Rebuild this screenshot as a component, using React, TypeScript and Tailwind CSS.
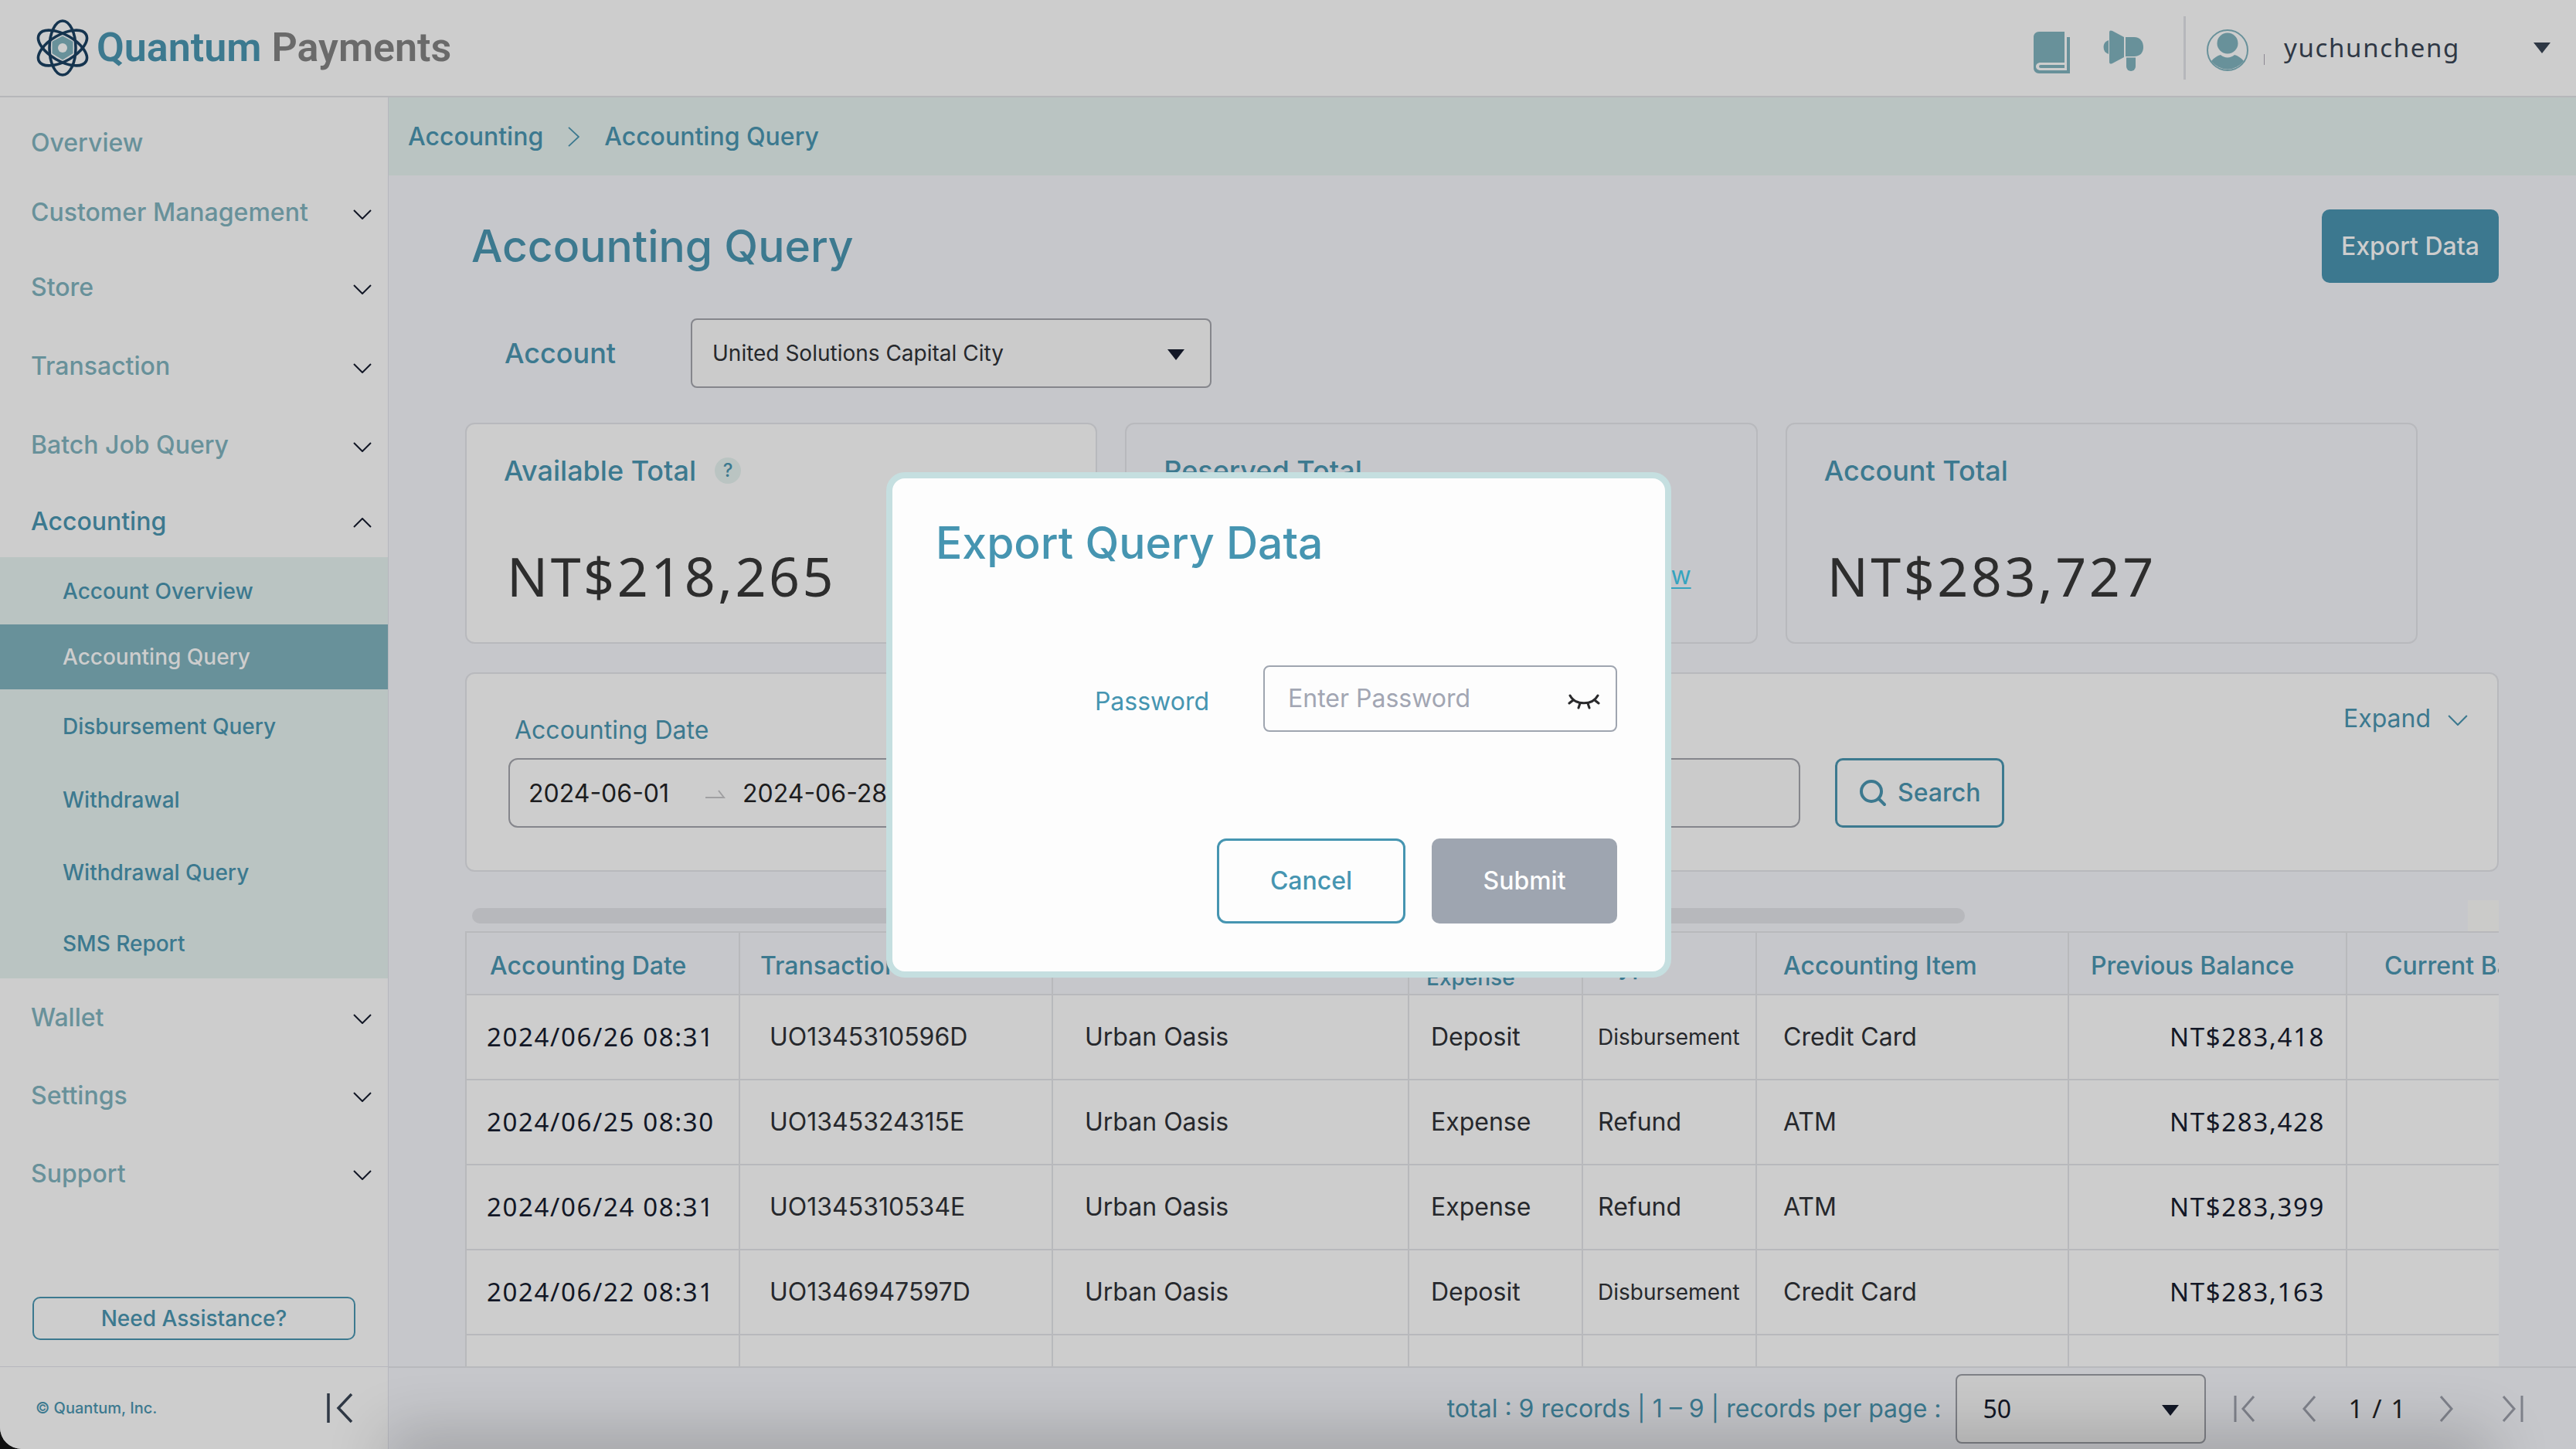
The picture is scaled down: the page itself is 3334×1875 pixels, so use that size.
import type { ReactNode } from "react";

type NavItem = { label: string; height: string; open?: boolean; leaf?: boolean };

const topNav: NavItem[] = [
  { label: "Overview", height: "h-[90px]", leaf: true },
  { label: "Customer Management", height: "h-[90px]" },
  { label: "Store", height: "h-[104px]" },
  { label: "Transaction", height: "h-[100px]" },
  { label: "Batch Job Query", height: "h-[104px]" },
  { label: "Accounting", height: "h-[93px]", open: true },
];

const subNav = [
  { label: "Account Overview", height: "h-[87px]" },
  { label: "Accounting Query", height: "h-[84px]", active: true },
  { label: "Disbursement Query", height: "h-[96px]" },
  { label: "Withdrawal", height: "h-[94px]" },
  { label: "Withdrawal Query", height: "h-[94px]" },
  { label: "SMS Report", height: "h-[90px]" },
];

const bottomNav: NavItem[] = [
  { label: "Wallet", height: "h-[101px]" },
  { label: "Settings", height: "h-[101px]" },
  { label: "Support", height: "h-[101px]" },
];

const rows = [
  ["2024/06/26 08:31", "UO1345310596D", "Urban Oasis", "Deposit", "Disbursement", "Credit Card", "NT$283,418"],
  ["2024/06/25 08:30", "UO1345324315E", "Urban Oasis", "Expense", "Refund", "ATM", "NT$283,428"],
  ["2024/06/24 08:31", "UO1345310534E", "Urban Oasis", "Expense", "Refund", "ATM", "NT$283,399"],
  ["2024/06/22 08:31", "UO1346947597D", "Urban Oasis", "Deposit", "Disbursement", "Credit Card", "NT$283,163"],
  ["", "", "", "", "", "", ""],
];

function Chevron({ dir = "down", className = "" }: { dir?: "down" | "up" | "right" | "left"; className?: string }) {
  const d = {
    down: "M1 1 L12 12 L23 1",
    up: "M1 12 L12 1 L23 12",
    right: "M1 1 L15 14 L1 27",
    left: "M15 1 L1 14 L15 27",
  }[dir];
  const flat = dir === "down" || dir === "up";
  return (
    <svg viewBox={flat ? "0 0 24 13" : "0 0 16 28"} className={className} fill="none" stroke="currentColor" strokeWidth="2" aria-hidden="true">
      <path d={d} />
    </svg>
  );
}

function Triangle({ className = "" }: { className?: string }) {
  return (
    <svg viewBox="0 0 22 14" className={`h-[14px] w-[22px] ${className}`} fill="currentColor" aria-hidden="true">
      <path d="M0 0h22L11 14z" />
    </svg>
  );
}

function Atom() {
  return (
    <svg viewBox="0 0 68 76" className="h-[76px] w-[68px]" fill="none" aria-hidden="true">
      <path d="M34 23 L47 30 V45 L34 53 L21 45 V30 Z" fill="#68919a" stroke="#68919a" strokeWidth="1" strokeLinejoin="round" />
      <circle cx="34" cy="38" r="6" fill="#cdcdcd" />
      <g stroke="#15344f" strokeWidth="3.6">
        <ellipse cx="34" cy="38" rx="17" ry="35" />
        <ellipse cx="34" cy="38" rx="17" ry="35" transform="rotate(60 34 38)" />
        <ellipse cx="34" cy="38" rx="17" ry="35" transform="rotate(-60 34 38)" />
      </g>
    </svg>
  );
}

function BookIcon() {
  return (
    <svg viewBox="0 0 47 54" className="h-[54px] w-[47px]" fill="currentColor" aria-hidden="true">
      <path d="M7 0H40V40H9C5 40 3 42.500 3 45C3 47.500 5 50 9 50H43V7H47V54H7C3 54 0 51 0 47V7C0 3 3 0 7 0Z" />
      <path d="M9 43H40V47H9A2 2 0 0 1 9 43Z" />
    </svg>
  );
}

function MegaphoneIcon() {
  return (
    <svg viewBox="0 0 54 53" className="h-[53px] w-[54px]" fill="currentColor" aria-hidden="true">
      <path d="M9 13V31A9.500 9.500 0 0 1 9 13Z" />
      <path d="M10 3C10 0 12 0 14 1L29 9V35L14 43C12 44 10 44 10 41Z" />
      <path d="M31 9H42C50 9 54 15 54 22C54 29 50 34 42 34H31Z" />
      <path d="M32 35.500H44V47A6 6 0 0 1 32 47Z" />
    </svg>
  );
}

function PersonIcon() {
  return (
    <svg viewBox="0 0 54 54" className="h-[54px] w-[54px]" aria-hidden="true">
      <circle cx="27" cy="27" r="26" fill="none" stroke="currentColor" strokeWidth="2" />
      <circle cx="27" cy="18" r="13.500" fill="currentColor" />
      <path d="M6 41C9 37 14 34 18 33C23 37.500 31 37.500 36 33C40 34 45 37 48 41A26 26 0 0 1 6 41Z" fill="currentColor" />
    </svg>
  );
}

function ClosedEyeIcon() {
  return (
    <svg viewBox="0 0 42 22" className="h-[22px] w-[42px]" fill="none" stroke="#2a2a2c" strokeWidth="3" strokeLinecap="round" aria-hidden="true">
      <path d="M3 3C10 16 32 16 39 3" />
      <path d="M7 9L2 13M35 9L40 13M16 13L14 19M26 13L28 19" />
    </svg>
  );
}

function SearchIcon() {
  return (
    <svg viewBox="0 0 36 36" className="h-[36px] w-[36px]" fill="none" stroke="currentColor" strokeWidth="4" strokeLinecap="round" aria-hidden="true">
      <circle cx="16" cy="16" r="13" />
      <path d="M26 26L33 33" />
    </svg>
  );
}

function NavRow({ item }: { item: NavItem }) {
  const tone = item.open ? "text-[#3c798f]" : "text-[#68919a]";
  if (item.leaf) {
    return (
      <a href="#overview" className={`flex items-center pl-[40px] ${item.height} ${tone}`}>
        {item.label}
      </a>
    );
  }
  return (
    <button type="button" aria-expanded={!!item.open} className={`flex w-full items-center justify-between pr-[21px] pl-[40px] text-left ${item.height} ${tone}`}>
      {item.label}
      <Chevron dir={item.open ? "up" : "down"} className="mt-1 h-[13px] w-[24px] text-[#121726]" />
    </button>
  );
}

function Card({ title, badge, tone = "", children }: { title: string; badge?: boolean; tone?: string; children: ReactNode }) {
  return (
    <section className={`h-[286px] rounded-xl border-2 border-[#b8b9bd] px-[48px] pt-[36px] ${tone}`}>
      <h2 className="flex items-center gap-[24px] text-[36px] leading-[48px] font-medium text-[#3c798f]">
        {title}
        {badge && <span className="flex h-[34px] w-[34px] items-center justify-center rounded-full bg-[#bac4c2] text-[24px]">?</span>}
      </h2>
      <div className="mt-[64px] flex h-[96px] items-center">{children}</div>
    </section>
  );
}

function Amount({ children }: { children: ReactNode }) {
  return <p className="pl-1 font-['Noto_Sans',sans-serif] text-[70px] leading-[96px] tracking-wider text-[#2d2d2d]">{children}</p>;
}

const th = "border-r-2 border-b-2 border-[#b8b9bc] pt-[6px] text-left font-medium whitespace-nowrap";
const td = "border-r-2 border-b-2 border-[#b8b9bc] whitespace-nowrap";

export default function App() {
  return (
    <div className="h-screen overflow-hidden bg-[#111111] font-['Inter','Liberation_Sans',sans-serif] text-[32px] leading-[40px]">
      <div className="relative flex h-full flex-col overflow-hidden rounded-bl-[28px] bg-[#c6c7cb]">
        <header className="flex h-[126px] shrink-0 items-center justify-between border-b-2 border-[#b6b7ba] bg-[#cdcdcd] pr-[33px] pl-[47px]">
          <a href="#home" className="flex items-center gap-[10px] font-['Roboto',sans-serif] text-[52px] leading-[64px]">
            <Atom />
            <span className="font-semibold text-[#6a6a6a]">
              <span className="text-[#3c798f]">Quantum</span> Payments
            </span>
          </a>
          <div className="flex items-center text-[#68919a]">
            <button type="button" aria-label="Documentation" className="pt-[12px]">
              <BookIcon />
            </button>
            <button type="button" aria-label="Announcements" className="ml-[41px] pt-[6px]">
              <MegaphoneIcon />
            </button>
            <span className="ml-[52px] h-[82px] w-[3px] bg-[#b6b7bb]" />
            <button type="button" className="ml-[27px] flex items-center">
              <span className="pt-[6px]">
                <PersonIcon />
              </span>
              <span className="mt-[30px] ml-[20px] h-[14px] w-px bg-[#8b8792]" />
              <span className="ml-[25px] font-['Noto_Sans',sans-serif] text-[33px] tracking-wider text-[#2f3845]">yuchuncheng</span>
              <Triangle className="ml-[95px] text-[#2f3845]" />
            </button>
          </div>
        </header>

        <div className="flex min-h-0 flex-1">
          <aside className="flex w-[503px] shrink-0 flex-col border-r border-[#b6b7be] bg-[#cdcdcd]">
            <nav aria-label="Main" className="flex-1 pt-[14px] font-medium">
              {topNav.map((item) => (
                <NavRow key={item.label} item={item} />
              ))}
              <ul className="bg-[#bac4c2] text-[28px]">
                {subNav.map((item) => (
                  <li key={item.label}>
                    <a
                      href="#accounting"
                      aria-current={item.active ? "page" : undefined}
                      className={`flex items-center pl-[81px] ${item.height} ${item.active ? "bg-[#68919a] text-[#cdcdcd]" : "text-[#3c798f]"}`}
                    >
                      {item.label}
                    </a>
                  </li>
                ))}
              </ul>
              {bottomNav.map((item) => (
                <NavRow key={item.label} item={item} />
              ))}
            </nav>
            <button type="button" className="mx-[42px] mb-[34px] h-[56px] rounded-[10px] border-2 border-[#3c798f] text-[28px] font-medium text-[#3c798f]">
              Need Assistance?
            </button>
            <div className="flex h-[107px] items-center justify-between border-t border-[#b6b7be] pr-[45px] pl-[46px]">
              <small className="text-[20px] font-medium text-[#3c798f]">© Quantum, Inc.</small>
              <button type="button" aria-label="Collapse sidebar" className="text-[#2f3845]">
                <svg viewBox="0 0 34 38" className="h-[38px] w-[34px]" fill="none" stroke="currentColor" strokeWidth="3.500">
                  <path d="M2 0V38M32 1L15 19L32 37" />
                </svg>
              </button>
            </div>
          </aside>

          <main className="flex min-w-0 flex-1 flex-col">
            <nav aria-label="Breadcrumb" className="flex h-[101px] shrink-0 items-center gap-[32px] bg-[#bac4c2] pl-[25px] font-medium text-[#3c798f]">
              <a href="#accounting">Accounting</a>
              <Chevron dir="right" className="h-[26px] w-[15px]" />
              <a href="#query">Accounting Query</a>
            </nav>

            <div className="min-h-0 flex-1 overflow-hidden pt-[44px] pr-[100px] pl-[99px]">
              <div className="flex h-[95px] items-center justify-between">
                <h1 className="pl-[8px] text-[57px] leading-[72px] font-medium text-[#3c798f]">Accounting Query</h1>
                <button type="button" className="h-full rounded-[10px] bg-[#3c788f] px-[25px] font-medium text-[#cdcdcd]">
                  Export Data
                </button>
              </div>

              <div className="mt-[46px] flex items-center">
                <label htmlFor="account" className="w-[292px] pl-[51px] text-[36px] font-medium text-[#3c798f]">
                  Account
                </label>
                <div className="relative">
                  <select id="account" className="h-[90px] w-[674px] appearance-none rounded-lg border-2 border-[#85868c] bg-[#cbcbcb] px-[26px] text-[28px] text-[#26282c]">
                    <option>United Solutions Capital City</option>
                  </select>
                  <Triangle className="pointer-events-none absolute top-[40px] right-[35px] text-[#121726]" />
                </div>
              </div>

              <div className="mt-[45px] mr-[105px] grid grid-cols-3 gap-[36px]">
                <Card title="Available Total" badge tone="bg-[#cdcdcd]">
                  <Amount>NT$218,265</Amount>
                </Card>
                <Card title="Reserved Total">
                  <a href="#reserved" className="mr-[36px] ml-auto text-[#36a4bf] underline decoration-2 underline-offset-4">
                    View
                  </a>
                </Card>
                <Card title="Account Total">
                  <Amount>NT$283,727</Amount>
                </Card>
              </div>

              <section className="mt-[37px] flex h-[258px] items-start justify-between rounded-xl border-2 border-[#b8b9bd] bg-[#cdcdcd] pt-[38px] pr-[38px] pl-[54px]">
                <form className="flex items-end pt-[15px]">
                  <div className="w-[818px]">
                    <label htmlFor="from" className="block pl-[8px] text-[#3c798f]">
                      Accounting Date
                    </label>
                    <div className="mt-[16px] flex h-[90px] items-center rounded-xl border-2 border-[#85868c] pt-[2px] pl-[24px] text-[#1c1c1e]">
                      <input id="from" defaultValue="2024-06-01" className="w-[200px] bg-transparent" />
                      <svg viewBox="0 0 26 14" className="ml-[29px] h-[14px] w-[26px]" fill="none" stroke="#a0a0a2" strokeWidth="2" aria-hidden="true">
                        <path d="M0 12H24L17 3" />
                      </svg>
                      <input aria-label="End date" defaultValue="2024-06-28" className="ml-[22px] w-[200px] bg-transparent" />
                    </div>
                  </div>
                  <input aria-label="Transaction ID" className="ml-[36px] h-[90px] w-[818px] rounded-xl border-2 border-[#85868c] bg-[#cbcbcb] px-[24px]" />
                  <button type="button" className="ml-[45px] flex h-[90px] items-center gap-[14px] rounded-[10px] border-3 border-[#3c798f] px-[28px] font-medium text-[#3c798f]">
                    <SearchIcon />
                    Search
                  </button>
                </form>
                <button type="button" className="flex items-center gap-[22px] text-[#3c798f]">
                  Expand
                  <Chevron className="mt-1 h-[14px] w-[26px]" />
                </button>
              </section>

              <div className="mt-[37px] flex h-[40px] items-center justify-between pl-[9px]">
                <div className="h-[20px] w-[1932px] rounded-[10px] bg-[#b7b8bc]" />
                <div className="h-[40px] w-[40px] bg-[#cbcbc9]" />
              </div>

              <div className="overflow-hidden">
                <table className="w-[2794px] table-fixed border-separate border-spacing-0 border-t-2 border-l-2 border-[#b8b9bc] bg-[#cdcdcd] text-[#26282c]">
                  <colgroup>
                    <col className="w-[354px]" />
                    <col className="w-[405px]" />
                    <col className="w-[461px]" />
                    <col className="w-[225px]" />
                    <col className="w-[225px]" />
                    <col className="w-[404px]" />
                    <col className="w-[360px]" />
                    <col className="w-[360px]" />
                  </colgroup>
                  <thead className="bg-[#c6c7cb] text-[#3c798f]">
                    <tr className="h-[81px]">
                      <th scope="col" className={`pl-[30px] ${th}`}>Accounting Date</th>
                      <th scope="col" className={`pl-[26px] ${th}`}>Transaction Number</th>
                      <th scope="col" className={`pl-[38px] ${th}`}>Store</th>
                      <th scope="col" className={`pl-[22px] text-[28px] leading-[30px] ${th}`}>
                        Deposit/
                        <br />
                        Expense
                      </th>
                      <th scope="col" className={`pl-[26px] ${th}`}>Type</th>
                      <th scope="col" className={`pl-[34px] ${th}`}>Accounting Item</th>
                      <th scope="col" className={`pl-[28px] ${th}`}>Previous Balance</th>
                      <th scope="col" className={`pl-[48px] ${th}`}>Current Balance</th>
                    </tr>
                  </thead>
                  <tbody>
                    {rows.map((r, i) => (
                      <tr key={i} className="h-[110px]">
                        <td className={`pl-[26px] font-['Noto_Sans',sans-serif] text-[33px] tracking-wider text-[#121726] ${td}`}>{r[0]}</td>
                        <td className={`pl-[38px] ${td}`}>{r[1]}</td>
                        <td className={`pl-[41px] ${td}`}>{r[2]}</td>
                        <td className={`pl-[28px] ${td}`}>{r[3]}</td>
                        <td className={`pl-[19px] ${r[4] === "Disbursement" ? "text-[28px]" : ""} ${td}`}>{r[4]}</td>
                        <td className={`pl-[34px] ${td}`}>{r[5]}</td>
                        <td className={`pr-[27px] text-right font-['Noto_Sans',sans-serif] text-[33px] tracking-wider text-[#121726] ${td}`}>{r[6]}</td>
                        <td className={td} />
                      </tr>
                    ))}
                  </tbody>
                </table>
              </div>
            </div>

            <footer className="flex h-[107px] shrink-0 items-center justify-end border-t-2 border-[#b8b9bd] pr-[68px] text-[#7f828b]">
              <label htmlFor="page-size" className="whitespace-pre text-[#3c798f]">
                total : 9 records | 1 – 9 | records per page :
              </label>
              <div className="relative ml-[18px]">
                <select id="page-size" className="h-[90px] w-[324px] appearance-none rounded-lg border-2 border-[#7f8187] bg-[#c9c9c9] px-[34px] font-['Noto_Sans',sans-serif] text-[#121726]">
                  <option>50</option>
                </select>
                <Triangle className="pointer-events-none absolute top-[40px] right-[35px] text-[#121726]" />
              </div>
              <button type="button" aria-label="First page" className="ml-[36px]">
                <svg viewBox="0 0 28 34" className="h-[34px] w-[28px]" fill="none" stroke="currentColor" strokeWidth="3">
                  <path d="M2 0V34M26 1L12 17L26 33" />
                </svg>
              </button>
              <button type="button" aria-label="Previous page" className="ml-[61px]">
                <svg viewBox="0 0 18 34" className="h-[34px] w-[18px]" fill="none" stroke="currentColor" strokeWidth="3">
                  <path d="M16 1L2 17L16 33" />
                </svg>
              </button>
              <span className="mx-[42px] font-['Noto_Sans',sans-serif] text-[33px] tracking-wider text-[#1c1c1e]">1 / 1</span>
              <button type="button" aria-label="Next page">
                <svg viewBox="0 0 18 34" className="h-[34px] w-[18px]" fill="none" stroke="currentColor" strokeWidth="3">
                  <path d="M2 1L16 17L2 33" />
                </svg>
              </button>
              <button type="button" aria-label="Last page" className="ml-[63px]">
                <svg viewBox="0 0 28 34" className="h-[34px] w-[28px]" fill="none" stroke="currentColor" strokeWidth="3">
                  <path d="M26 0V34M2 1L16 17L2 33" />
                </svg>
              </button>
            </footer>
          </main>
        </div>

        <div className="pointer-events-none absolute right-[150px] bottom-0 left-[540px] h-0 shadow-[0_20px_80px_40px_rgba(0,0,0,0.2)]" />
      </div>

      <div className="fixed inset-0 flex items-center justify-center pr-[24px]">
        <div role="dialog" aria-modal="true" aria-labelledby="export-title" className="w-[1016px] rounded-3xl border-8 border-[#c5dfe0] bg-[#fdfdfd] pt-[48px] pr-[62px] pb-[62px] pl-[56px] text-[#4695b1]">
          <h2 id="export-title" className="text-[57px] leading-[72px] font-medium">
            Export Query Data
          </h2>
          <div className="mt-[122px] flex items-center justify-end gap-[70px]">
            <label htmlFor="password" className="pt-[8px]">
              Password
            </label>
            <div className="relative">
              <input id="password" type="password" placeholder="Enter Password" className="h-[86px] w-[458px] rounded-lg border-2 border-[#9fa5b0] bg-transparent pr-[80px] pl-[30px] placeholder:text-[#a2a6b3]" />
              <button type="button" aria-label="Show password" className="absolute top-[36px] right-[22px]">
                <ClosedEyeIcon />
              </button>
            </div>
          </div>
          <div className="mt-[138px] flex justify-end gap-[34px] font-medium">
            <button type="button" className="h-[110px] w-[244px] rounded-xl border-3 border-[#4695b1]">
              Cancel
            </button>
            <button type="submit" className="h-[110px] w-[240px] rounded-[10px] bg-[#9ea5b0] text-[#fdfdfd]">
              Submit
            </button>
          </div>
        </div>
      </div>
    </div>
  );
}
